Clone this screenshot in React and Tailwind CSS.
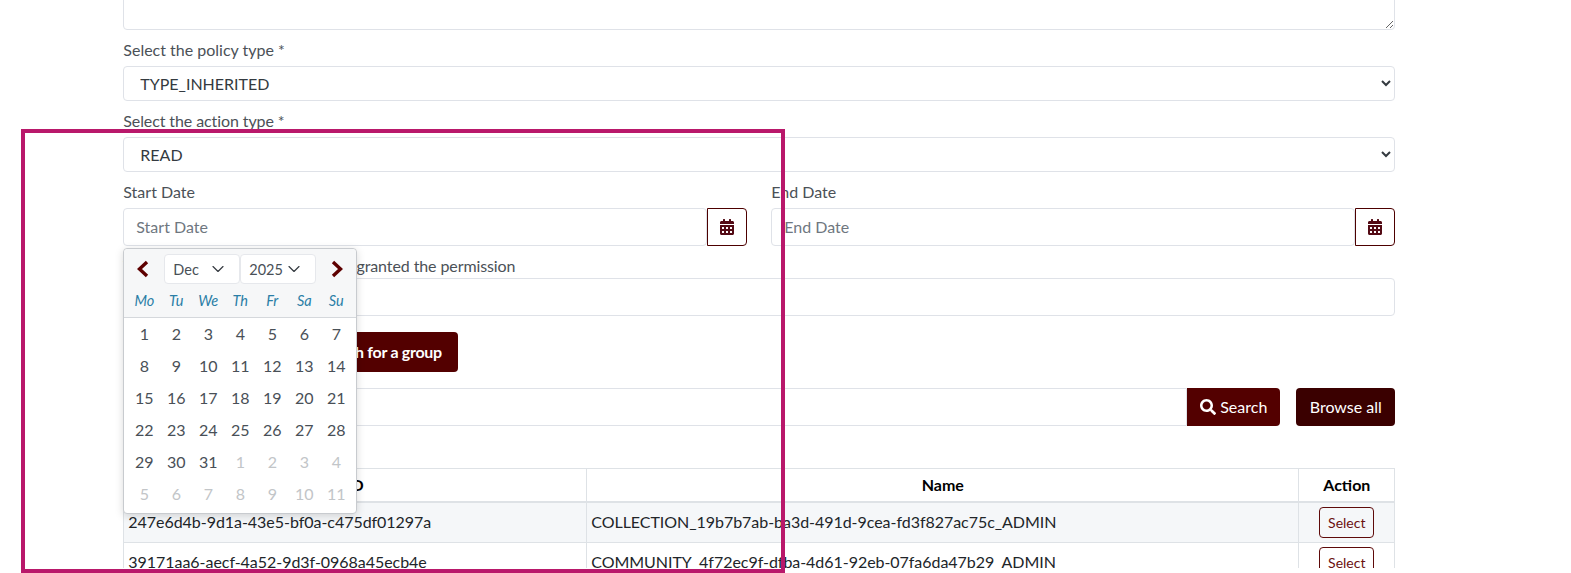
import { ChevronDown } from "lucide-react"
import { FaCalendarAlt, FaSearch } from "react-icons/fa"

const weekdays = ["Mo", "Tu", "We", "Th", "Fr", "Sa", "Su"]

const weeks = [
    [1, 2, 3, 4, 5, 6, 7],
    [8, 9, 10, 11, 12, 13, 14],
    [15, 16, 17, 18, 19, 20, 21],
    [22, 23, 24, 25, 26, 27, 28],
    [29, 30, 31, 1, 2, 3, 4],
    [5, 6, 7, 8, 9, 10, 11],
]

const rows = [
    ["247e6d4b-9d1a-43e5-bf0a-c475df01297a", "COLLECTION_19b7b7ab-ba3d-491d-9cea-fd3f827ac75c_ADMIN"],
    ["39171aa6-aecf-4a52-9d3f-0968a45ecb4e", "COMMUNITY_4f72ec9f-dfba-4d61-92eb-07fa6da47b29_ADMIN"],
]

const inputClass = "w-full h-[37.5px] px-3 border border-[#dfe2e8] rounded-[4px] bg-white text-[16px] text-[#495057] placeholder:text-[#6f777f] outline-none"
const selectClass = "w-full h-[35px] pl-[12px] pr-1 border border-[#dfe2e8] rounded-[4px] bg-white text-[16px] text-[#343a40] outline-none"
const labelClass = "block h-[24px] leading-[24px]"

const MonthSelect = ({ label }) => (
    <div className="flex items-center justify-between w-[76px] h-[30px] pl-[8px] pr-[11px] bg-white border border-[#e6e8ec] rounded-[4px] text-[14.5px] text-[#495057]">
        <span>{label}</span>
        <ChevronDown size={20} strokeWidth={1.4} className="text-[#343a40]" />
    </div>
)

const Arrow = ({ flip }) => (
    <svg width="12" height="18" viewBox="0 0 12 18" className="shrink-0 text-[#5e0000]">
        <path d={flip ? "M2 2 L9.5 9 L2 16" : "M10 2 L2.5 9 L10 16"} fill="none" stroke="currentColor" strokeWidth="3.4" />
    </svg>
)

const Calendar = () => (
    <div className="absolute left-0 top-[68.4px] z-10 w-[233.5px] h-[266px] bg-white border border-[#c8cbcf] rounded-[4px] shadow-[0_2px_8px_rgba(0,0,0,0.15)] text-[16px]">
        <div className="bg-[#f6f7f8] border-b border-[#d5d8dc] h-[69px] rounded-t-[4px] pt-[5px]">
            <div className="flex items-center h-[30px] px-[13px]">
                <Arrow />
                <div className="flex ml-[15px] mr-auto">
                    <MonthSelect label="Dec" />
                    <MonthSelect label="2025" />
                </div>
                <Arrow flip />
            </div>
            <div className="grid grid-cols-7 w-[224px] ml-[4px] mt-[7px] text-[14.5px] italic text-[#2a7ea6] text-center leading-[20px]">
                {weekdays.map((day) => (
                    <span key={day}>{day}</span>
                ))}
            </div>
        </div>
        <div className="w-[224px] ml-[4px]">
            {weeks.map((week, i) => (
                <div key={i} className="grid grid-cols-7 h-[32px] items-center text-center">
                    {week.map((day, j) => {
                        const outside = (i === 4 && j > 2) || i === 5
                        return (
                            <span key={j} className={outside ? "text-[#c2c5c8]" : "text-[#495057]"}>{day}</span>
                        )
                    })}
                </div>
            ))}
        </div>
    </div>
)

const DateField = ({ label, children }) => (
    <div className="relative">
        <label className={labelClass + " mb-[4px]"}>{label}</label>
        <div className="flex">
            <input type="text" placeholder={label} className={inputClass} />
            <button className="flex shrink-0 items-center justify-center w-[40px] h-[37.5px] border border-[#4d0000] rounded-r-[4px] text-[#530a14] text-[16px]">
                <FaCalendarAlt />
            </button>
        </div>
        {children}
    </div>
)

const App = () => {
    return (
        <div className="relative h-[573px] overflow-hidden bg-white font-['Lato','Noto_Sans',sans-serif] text-[16px] text-[#4b5157]">
            <div className="h-[568px] overflow-hidden">
                <div className="w-[1272px] ml-[123.3px] -mt-[9.7px]">
                    <textarea className="block w-full h-[39.7px] border border-[#dfe2e8] rounded-[4px] outline-none" />

                    <label className={labelClass + " mt-[8px] mb-[4px]"}>Select the policy type *</label>
                    <select className={selectClass} defaultValue="TYPE_INHERITED">
                        <option>TYPE_INHERITED</option>
                    </select>

                    <label className={labelClass + " mt-[8px] mb-[4px] tracking-[-0.1px]"}>Select the action type *</label>
                    <select className={selectClass} defaultValue="READ">
                        <option>READ</option>
                    </select>

                    <div className="grid grid-cols-[624px_624px] gap-x-[24px] mt-[8px]">
                        <DateField label="Start Date">
                            <Calendar />
                        </DateField>
                        <DateField label="End Date" />
                    </div>

                    <label className={labelClass + " mt-[8.5px] tracking-[-0.1px]"}>The eperson or group that will be granted the permission</label>
                    <input type="text" className={inputClass} />

                    <div className="flex justify-start gap-2 mt-[16.5px] w-[334.5px]">
                        <button className="h-[39.7px] px-4 ml-auto bg-[#530000] rounded-[4px] text-white font-bold whitespace-nowrap tracking-[-0.3px]">Search for a group</button>
                    </div>

                    <div className="flex mt-[16px]">
                        <input type="text" className={inputClass + " h-[38px] rounded-r-none"} />
                        <button className="flex shrink-0 items-center justify-center gap-[4px] w-[93px] h-[38px] bg-[#530000] rounded-r-[4px] text-white">
                            <FaSearch className="text-[16px]" />
                            Search
                        </button>
                        <button className="shrink-0 w-[99px] h-[38px] ml-[16px] bg-[#3a0000] rounded-[4px] text-white">Browse all</button>
                    </div>

                    <table className="w-[1271px] table-fixed border-collapse mt-[42px] text-[#212529]">
                        <colgroup>
                            <col className="w-[463px]" />
                            <col className="w-[712px]" />
                            <col className="w-[96px]" />
                        </colgroup>
                        <thead>
                            <tr className="h-[34px] text-black font-bold">
                                <th className="border border-[#dee2e6] border-b-2">ID</th>
                                <th className="border border-[#dee2e6] border-b-2">Name</th>
                                <th className="border border-[#dee2e6] border-b-2">Action</th>
                            </tr>
                        </thead>
                        <tbody>
                            {rows.map(([id, name], i) => (
                                <tr key={id} className={i === 0 ? "h-[40px] bg-[#f5f7f9]" : "h-[40px]"}>
                                    <td className="border border-[#dee2e6] px-[4px] whitespace-nowrap tracking-[-0.04px]">{id}</td>
                                    <td className="border border-[#dee2e6] px-[4px] whitespace-nowrap tracking-[-0.04px]">{name}</td>
                                    <td className="border border-[#dee2e6] text-center">
                                        <button className="w-[55px] h-[31px] border border-[#5e0a0a] rounded-[4px] text-[14px] text-[#6b1010]">Select</button>
                                    </td>
                                </tr>
                            ))}
                        </tbody>
                    </table>
                </div>
            </div>

            {/* highlight frame drawn over the page */}
            <div className="absolute left-[21px] top-[129px] w-[764px] h-[444px] border-4 border-[#b9186b] pointer-events-none z-20" />
        </div>
    )
}

export default App
